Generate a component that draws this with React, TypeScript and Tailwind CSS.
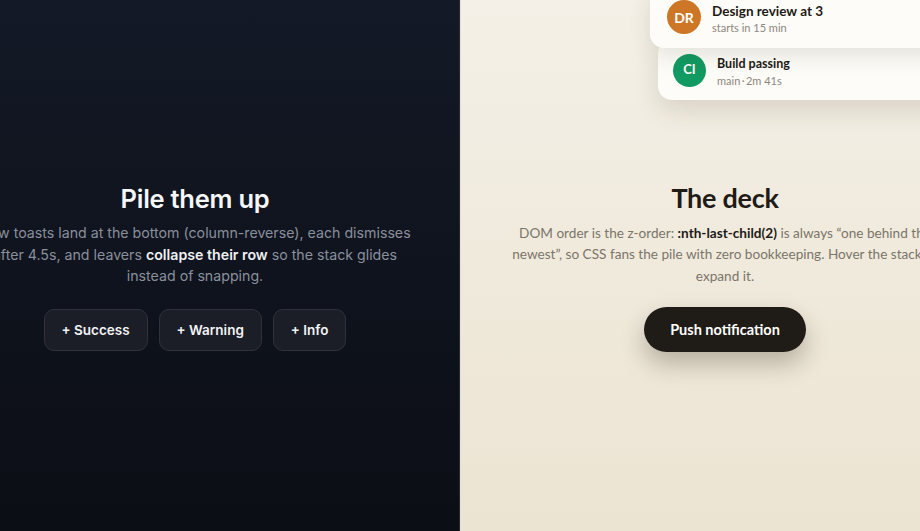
import { type FunctionComponent } from "react";

const darkButtons = ["+ Success", "+ Warning", "+ Info"];

const PilePanel: FunctionComponent = () => {
	return (
		<section className="flex h-full w-[529px] shrink-0 flex-col items-center justify-center border-r border-[#2a2d34] bg-gradient-to-b from-[#131926] to-[#0b0e15] pt-[2px] font-['Inter',sans-serif]">
			<h2 className="text-[25.5px] leading-[34px] font-semibold tracking-[-0.01em] text-[#f5f6f8]">Pile them up</h2>
			<p className="mt-[6px] text-center text-[14.2px] leading-[21.5px] whitespace-nowrap text-[#8a8f9c]">
				New toasts land at the bottom (column-reverse), each dismisses
				<br />
				after 4.5s, and leavers <strong className="font-semibold text-[#eef0f3]">collapse their row</strong> so the stack glides
				<br />
				instead of snapping.
			</p>
			<div className="mt-[22px] flex gap-[11px]">
				{darkButtons.map((label) => {
					return (
						<button
							key={label}
							type="button"
							className="h-[42px] rounded-[10px] border border-[#2e323c] bg-[#1b1e27] px-[17px] text-[13.5px] font-semibold text-[#f2f3f5]"
						>
							{label}
						</button>
					);
				})}
			</div>
		</section>
	);
};

type Toast = {
	readonly initials: string;
	readonly title: string;
	readonly detail: string;
	readonly avatarClassName: string;
};

const frontToast: Toast = { initials: "DR", title: "Design review at 3", detail: "starts in 15 min", avatarClassName: "bg-[#cc7626]" };
const backToast: Toast = { initials: "CI", title: "Build passing", detail: "main\u2009·\u20092m 41s", avatarClassName: "bg-[#129a63]" };

const ToastCard: FunctionComponent<{ readonly toast: Toast; readonly className: string; readonly compact?: boolean }> = ({
	toast,
	className,
	compact = false
}) => {
	return (
		<div className={`absolute flex items-center gap-[11px] rounded-[14px] bg-[#fdfcf8] ${className}`}>
			<span
				className={`flex shrink-0 items-center justify-center rounded-full font-bold text-white ${compact ? "size-[33px] text-[13px]" : "size-[34px] text-[14px]"} ${toast.avatarClassName}`}
			>
				{toast.initials}
			</span>
			<div className="mt-[3px] flex flex-col">
				<span className={`leading-[18px] font-bold text-[#1e1a15] ${compact ? "text-[12.5px]" : "text-[13.5px]"}`}>{toast.title}</span>
				<span className="text-[11px] leading-[15px] text-[#8d877c]">{toast.detail}</span>
			</div>
		</div>
	);
};

const DeckPanel: FunctionComponent = () => {
	return (
		<section className="relative flex h-full w-[529px] shrink-0 flex-col items-center justify-center border-l border-[#e2ddd1] bg-gradient-to-b from-[#f4f0e7] to-[#ece4d2] pt-[2px] font-['Lato',sans-serif]">
			<ToastCard
				toast={backToast}
				compact={true}
				className="top-[40px] left-[197px] h-[60px] w-[310px] px-[15px] shadow-[0_10px_26px_rgba(60,45,20,0.14)]"
			/>
			<ToastCard
				toast={frontToast}
				className="top-[-14px] left-[189px] h-[62px] w-[320px] px-[17px] shadow-[0_8px_22px_rgba(60,45,20,0.12)]"
			/>
			<h2 className="text-[27px] leading-[34px] font-bold tracking-[-0.01em] text-[#1f1b16]">The deck</h2>
			<p className="mt-[8px] text-center text-[13.6px] leading-[21.5px] whitespace-nowrap text-[#7b7569]">
				DOM order is the z-order: <strong className="font-bold text-[#1f1b16]">:nth-last-child(2)</strong> is always “one behind the
				<br />
				newest”, so CSS fans the pile with zero bookkeeping. Hover the stack to
				<br />
				expand it.
			</p>
			<button
				type="button"
				className="mt-[20px] h-[45px] rounded-full bg-[#1f1b17] px-[26px] text-[14.5px] font-bold text-white shadow-[0_12px_24px_rgba(40,30,15,0.28)]"
			>
				Push notification
			</button>
		</section>
	);
};

export default function App() {
	return (
		<main className="flex h-[531px] w-full justify-center overflow-hidden">
			<PilePanel />
			<DeckPanel />
		</main>
	);
}
